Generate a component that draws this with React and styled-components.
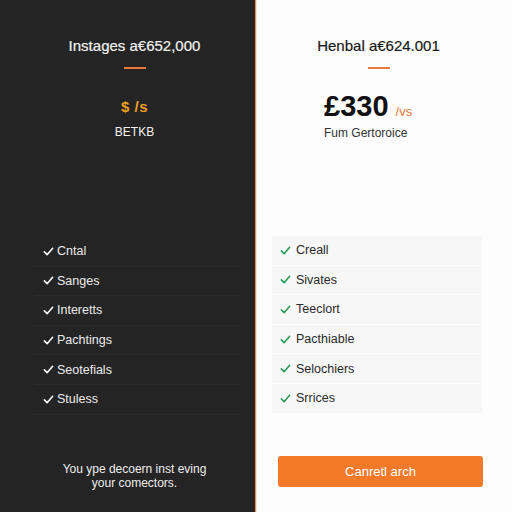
import React from "react";
import styled, { createGlobalStyle } from "styled-components";

const Global = createGlobalStyle`
  html, body { margin: 0; padding: 0; }
  body { font-family: "Liberation Sans", Arial, sans-serif; }
`;

const Page = styled.div`
  width: 512px;
  height: 512px;
  display: grid;
  grid-template-columns: 255px 2px 255px;
  overflow: hidden;
`;

const Panel = styled.section`
  background: ${(p) => (p.$dark ? "#242424" : "#fdfdfd")};
  color: ${(p) => (p.$dark ? "#f2f2f2" : "#1a1a1a")};
  display: flex;
  flex-direction: column;
  padding: ${(p) => (p.$dark ? "37px 0 0 14px" : "37px 0 0 0")};
  box-sizing: border-box;
`;

const Divider = styled.div`
  background: linear-gradient(to right, #e88a5a 0 1px, #fbe3d4 1px 2px);
`;

const Title = styled.h2`
  margin: 0;
  font-size: 15px;
  line-height: 18px;
  font-weight: 400;
  text-align: center;
  position: relative;
  left: ${(p) => p.$shift || 0}px;
  -webkit-text-stroke: 0.2px currentColor;
`;

const Rule = styled.div`
  width: 22px;
  height: 2px;
  background: #e8793a;
  margin: 12px auto 0;
  position: relative;
  left: ${(p) => p.$shift || 0}px;
`;

const PriceBlockCenter = styled.div`
  text-align: center;
  margin-top: 29px;
`;

const SmallPrice = styled.div`
  color: #f0a020;
  font-weight: 700;
  font-size: 15px;
  line-height: 18px;
  letter-spacing: 0.5px;
`;

const Sub = styled.div`
  font-size: 12px;
  line-height: 14px;
  margin-top: ${(p) => p.$mt}px;
  color: ${(p) => p.$color || "inherit"};
`;

const PriceBlockLeft = styled.div`
  margin: 21px 0 0 67px;
`;

const BigPriceRow = styled.div`
  display: flex;
  align-items: baseline;
  gap: 7px;
  height: 32px;
`;

const BigPrice = styled.span`
  font-size: 29px;
  line-height: 32px;
  font-weight: 700;
  color: #111;
`;

const Per = styled.span`
  font-size: 13px;
  line-height: 1;
  color: #e8793a;
`;

const List = styled.ul`
  list-style: none;
  margin: ${(p) => (p.$dark ? "98px 0 0 20px" : "96px 0 0 15px")};
  padding: 0;
  width: ${(p) => (p.$dark ? "205px" : "210px")};
  display: flex;
  flex-direction: column;
  gap: ${(p) => (p.$dark ? "0" : "1px")};
`;

const Item = styled.li`
  height: ${(p) => (p.$dark ? "29.6px" : "28.6px")};
  display: flex;
  align-items: center;
  gap: ${(p) => (p.$dark ? "3px" : "5px")};
  padding-left: ${(p) => (p.$dark ? "9px" : "8px")};
  font-size: 12.5px;
  color: ${(p) => (p.$dark ? "#ececec" : "#2a2a2a")};
  background: ${(p) => (p.$dark ? "transparent" : "#f7f7f7")};
  border-bottom: ${(p) => (p.$dark ? "1px solid #2b2b2b" : "none")};
  box-sizing: border-box;
`;

const Footer = styled.p`
  margin: 47px 0 0;
  font-size: 12px;
  line-height: 14px;
  text-align: center;
  color: #eeeeee;
`;

const Button = styled.button`
  margin: 43px 0 0 21px;
  width: 205px;
  height: 31px;
  border: none;
  border-radius: 3px;
  background: #f47a2a;
  color: #fff;
  font-family: inherit;
  font-size: 13px;
  font-weight: 400;
`;

const Check = ({ color }) => (
  <svg width="11" height="11" viewBox="0 0 12 12" fill="none">
    <path d="M1.5 6.5 L4.5 9.5 L10.5 2.5" stroke={color} strokeWidth="1.8" strokeLinecap="round" strokeLinejoin="round" />
  </svg>
);

const leftItems = ["Cntal", "Sanges", "Interetts", "Pachtings", "Seotefials", "Stuless"];
const rightItems = ["Creall", "Sivates", "Teeclort", "Pacthiable", "Selochiers", "Srrices"];

export default function App() {
  return (
    <>
      <Global />
      <Page>
        <Panel $dark>
          <Title>Instages a€652,000</Title>
          <Rule />
          <PriceBlockCenter>
            <SmallPrice>$ /s</SmallPrice>
            <Sub $mt={9}>BETKB</Sub>
          </PriceBlockCenter>
          <List $dark>
            {leftItems.map((t) => (
              <Item $dark key={t}>
                <Check color="#f5f5f5" />
                {t}
              </Item>
            ))}
          </List>
          <Footer>
            You ype decoern inst eving
            <br />
            your comectors.
          </Footer>
        </Panel>
        <Divider />
        <Panel>
          <Title $shift={-6}>Henbal a€624.001</Title>
          <Rule $shift={-6} />
          <PriceBlockLeft>
            <BigPriceRow>
              <BigPrice>£330</BigPrice>
              <Per>/vs</Per>
            </BigPriceRow>
            <Sub $mt={4} $color="#333">Fum Gertoroice</Sub>
          </PriceBlockLeft>
          <List>
            {rightItems.map((t) => (
              <Item key={t}>
                <Check color="#2a9d5c" />
                {t}
              </Item>
            ))}
          </List>
          <Button>Canretl arch</Button>
        </Panel>
      </Page>
    </>
  );
}
